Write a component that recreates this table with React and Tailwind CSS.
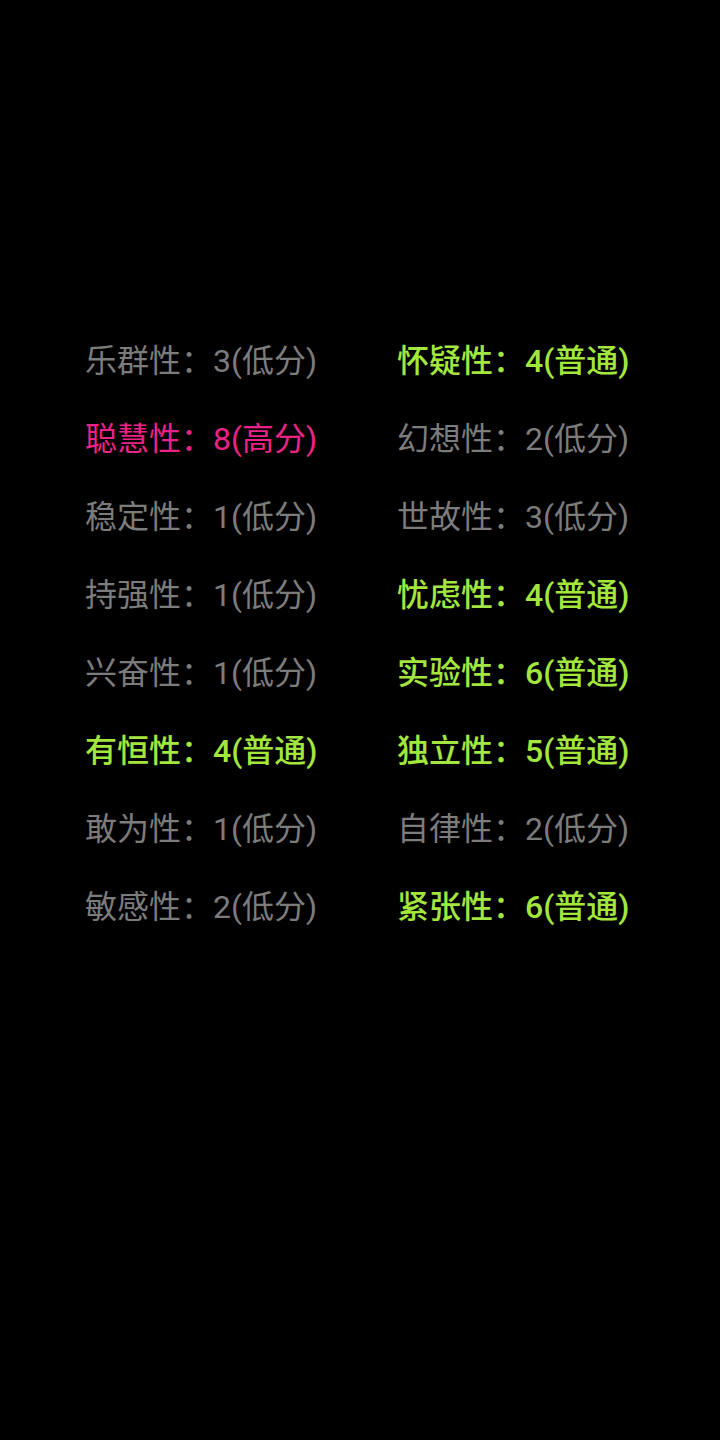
const traits = [
  ['乐群性', 3, '低分', 'low'],
  ['怀疑性', 4, '普通', 'mid'],
  ['聪慧性', 8, '高分', 'high'],
  ['幻想性', 2, '低分', 'low'],
  ['稳定性', 1, '低分', 'low'],
  ['世故性', 3, '低分', 'low'],
  ['持强性', 1, '低分', 'low'],
  ['忧虑性', 4, '普通', 'mid'],
  ['兴奋性', 1, '低分', 'low'],
  ['实验性', 6, '普通', 'mid'],
  ['有恒性', 4, '普通', 'mid'],
  ['独立性', 5, '普通', 'mid'],
  ['敢为性', 1, '低分', 'low'],
  ['自律性', 2, '低分', 'low'],
  ['敏感性', 2, '低分', 'low'],
  ['紧张性', 6, '普通', 'mid'],
];

const levelClass = {
  low: 'text-[#7c7c7c] font-normal',
  mid: 'text-[#a2e63e] font-medium',
  high: 'text-[#ec2387] font-normal',
};

export default function App() {
  return (
    <div className="w-[720px] h-[1440px] bg-black pt-[322px] pl-[85px] font-['Roboto','Noto_Sans_CJK_SC',sans-serif]">
      <div className="grid grid-cols-[312px_312px]">
        {traits.map(([name, score, level, kind]) => (
          <div key={name} className={`h-[78px] leading-[78px] text-[32px] whitespace-nowrap ${levelClass[kind]}`}>
            {name}：{score}({level})
          </div>
        ))}
      </div>
    </div>
  );
}
